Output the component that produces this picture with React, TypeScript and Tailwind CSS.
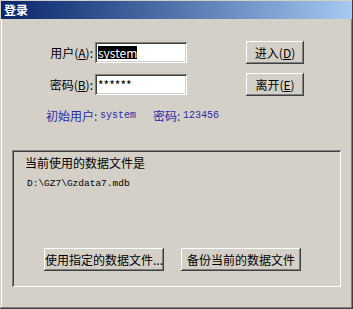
const raised =
  'bg-[#d4d0c8] shadow-[inset_-1px_-1px_#404040,inset_1px_1px_#ffffff,inset_-2px_-2px_#808080,inset_2px_2px_#d4d0c8]'
const sunken =
  'bg-white shadow-[inset_1px_1px_#808080,inset_-1px_-1px_#ffffff,inset_2px_2px_#404040,inset_-2px_-2px_#d4d0c8]'
const mono = { fontFamily: '"Liberation Mono", monospace' }

function Row({ label, hot, value, selected, btn, btnHot }: { label: string; hot: string; value: string; selected?: boolean; btn: string; btnHot: string }) {
  return (
    <div className="flex items-center h-[23px]">
      <div className="w-[48px] text-right whitespace-nowrap">
        {label}(<span className="underline">{hot}</span>):
      </div>
      <div className={`ml-[2px] w-[92px] h-[21px] flex items-center pl-[3px] ${sunken}`}>
        <span className={selected ? 'bg-black text-white leading-[13px]' : 'leading-[13px]'}>{value}</span>
      </div>
      <button className={`ml-[59px] w-[58px] h-[23px] flex items-center justify-center ${raised}`}>
        {btn}(<span className="underline">{btnHot}</span>)
      </button>
    </div>
  )
}

export default function App() {
  return (
    <div
      className="w-[353px] h-[309px] bg-[#d4d0c8] text-[12px] text-black flex flex-col shadow-[inset_-1px_-1px_#404040,inset_1px_1px_#d4d0c8,inset_-2px_-2px_#808080,inset_2px_2px_#ffffff]"
      style={{ fontFamily: '"Noto Sans CJK SC", "Liberation Sans", sans-serif' }}
    >
      <div className="h-[18px] mx-[1px] mt-[1px] bg-gradient-to-r from-[#0a246a] to-[#a6caf0] flex items-center pl-[3px] text-white font-bold leading-none">
        登录
      </div>
      <div className="pl-[45px] pt-[22px] flex flex-col gap-[9px]">
        <Row label="用户" hot="A" value="system" selected btn="进入" btnHot="D" />
        <Row label="密码" hot="B" value="******" btn="离开" btnHot="E" />
      </div>
      <div className="pl-[46px] mt-[13px] h-[14px] leading-[14px] text-[#2a2aa8] flex items-center whitespace-pre">
        <span>初始用户: </span>
        <span style={mono} className="text-[10px]">system</span>
        <span className="ml-[17px]">密码: </span>
        <span style={mono} className="text-[10px]">123456</span>
      </div>
      <div className="mx-[12px] mt-[27px] h-[137px] w-[329px] flex flex-col shadow-[inset_1px_1px_#808080,inset_-1px_-1px_#ffffff,inset_2px_2px_#404040,inset_-2px_-2px_#d4d0c8]">
        <div className="pl-[13px] pt-[6px] leading-[14px]">当前使用的数据文件是</div>
        <div className="pl-[15px] mt-[7px] leading-[14px] text-[9.5px]" style={mono}>
          D:\GZ7\Gzdata7.mdb
        </div>
        <div className="flex gap-[17px] pl-[32px] mt-[57px]">
          <button className={`w-[120px] h-[23px] flex items-center justify-center ${raised}`}>使用指定的数据文件...</button>
          <button className={`w-[120px] h-[23px] flex items-center justify-center ${raised}`}>备份当前的数据文件</button>
        </div>
      </div>
    </div>
  )
}
